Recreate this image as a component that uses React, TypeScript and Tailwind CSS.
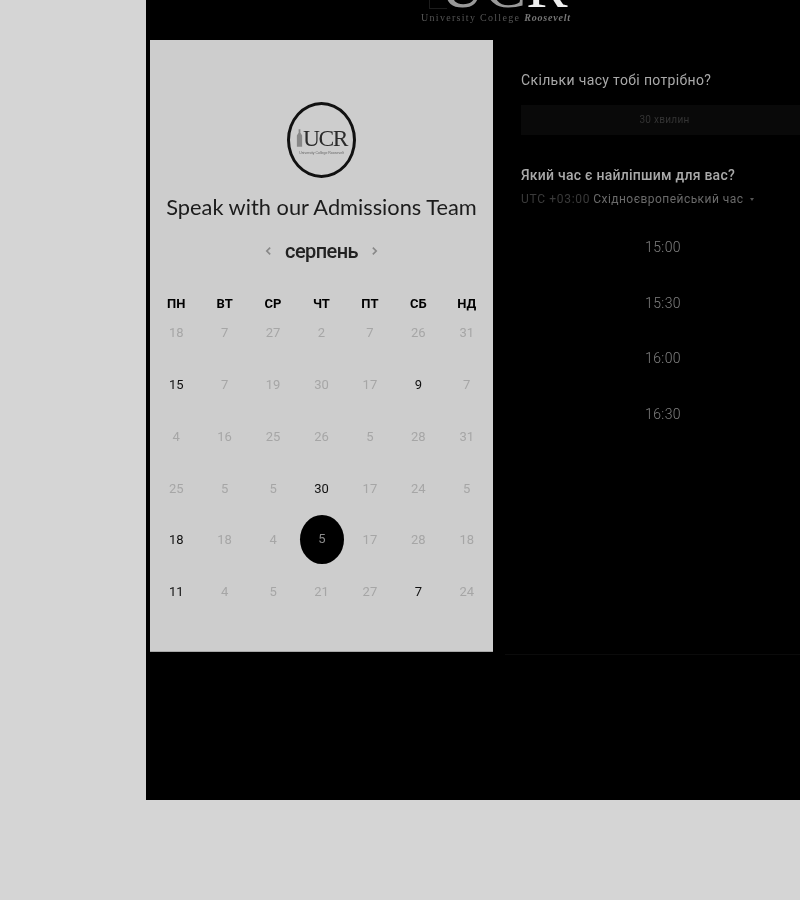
const weekDays = ['ПН', 'ВТ', 'СР', 'ЧТ', 'ПТ', 'СБ', 'НД'];

const rows = [
  [18, 7, 27, 2, 7, 26, 31],
  [15, 7, 19, 30, 17, 9, 7],
  [4, 16, 25, 26, 5, 28, 31],
  [25, 5, 5, 30, 17, 24, 5],
  [18, 18, 4, 5, 17, 28, 18],
  [11, 4, 5, 21, 27, 7, 24],
];

// row index + column index of the days that can be picked
const activeDays = ['1-0', '1-5', '3-3', '4-0', '5-0', '5-5'];

const times = ['15:00', '15:30', '16:00', '16:30'];

function Logo() {
  return (
    <div className="relative flex h-[76px] w-[69px] flex-col items-center justify-center rounded-[50%] border-[3px] border-[#111]">
      <div className="flex items-end">
        <svg className="mb-[3px] h-[20px] w-[7px]" viewBox="0 0 8 20" fill="#888">
          <path d="M3 0h2v4l2 3v13H1V7l2-3z" />
        </svg>
        <span className="font-['Liberation_Serif',serif] text-[23.5px] leading-[25px] tracking-[-1.5px] text-[#2a2a2a]">
          UCR
        </span>
      </div>
      <span className="whitespace-nowrap font-['Liberation_Sans',sans-serif] text-[3.5px] leading-[4px] text-[#666]">
        University College Roosevelt
      </span>
    </div>
  );
}

function Calendar() {
  return (
    <div className="flex h-[612px] w-[343px] shrink-0 flex-col items-center border-b border-[#a8a8a8] bg-[#cdcdcd] px-[2px] pt-[62px]">
      <Logo />
      <h1 className="mt-[14px] whitespace-nowrap font-['Lato',sans-serif] text-[21.8px] leading-[30px] text-[#1c1c1c]">
        Speak with our Admissions Team
      </h1>
      <div className="mt-[14px] flex h-[30px] items-center gap-[13px]">
        <svg className="h-[10px] w-[7px]" viewBox="0 0 8 12" fill="none" stroke="#888" strokeWidth="2">
          <path d="M6 2L2 6l4 4" />
        </svg>
        <span className="font-['Roboto',sans-serif] text-[20px] font-medium tracking-[-0.6px] text-[#222]">
          серпень
        </span>
        <svg className="h-[10px] w-[7px]" viewBox="0 0 8 12" fill="none" stroke="#888" strokeWidth="2">
          <path d="M2 2l4 4-4 4" />
        </svg>
      </div>
      <div className="mt-[31px] grid w-full grid-cols-7 font-['Roboto',sans-serif]">
        {weekDays.map((day) => (
          <div key={day} className="h-[10px] text-center text-[13px] font-bold leading-[14px] text-black">
            {day}
          </div>
        ))}
      </div>
      <div className="grid w-full grid-cols-7 font-['Roboto',sans-serif]">
        {rows.map((row, r) =>
          row.map((value, c) => {
            const key = `${r}-${c}`;
            const selected = r === 4 && c === 3;
            const active = activeDays.includes(key);
            return (
              <div key={key} className="flex h-[51.8px] items-center justify-center text-[13px]">
                {selected ? (
                  <span className="mb-[2px] ml-[1px] flex h-[49px] w-[44px] items-center justify-center rounded-[50%] bg-black text-[#8a8a8a]">
                    {value}
                  </span>
                ) : (
                  <span className={active ? 'text-[#111]' : 'text-[#a6a6a6]'}>{value}</span>
                )}
              </div>
            );
          })
        )}
      </div>
    </div>
  );
}

function Schedule() {
  return (
    <div className="ml-[12px] flex h-[615px] flex-1 flex-col border-b border-[#0b0b0b] pl-[16px] pt-[30px] font-['Roboto',sans-serif]">
      <p className="text-[14px] leading-[20px] tracking-[0.35px] text-[#a9a9a9]">Скільки часу тобі потрібно?</p>
      <div className="mt-[15px] flex h-[30px] w-[284px] items-center justify-center bg-[#090909] pb-[1px] pl-[3px] text-[10px] tracking-[0.3px] text-[#343434]">
        30 хвилин
      </div>
      <p className="mt-[30px] text-[14px] font-medium leading-[20px] tracking-[0.25px] text-[#a9a9a9]">
        Який час є найліпшим для вас?
      </p>
      <div className="mt-[4px] flex h-[20px] items-center whitespace-nowrap text-[12px]">
        <span className="tracking-[0.7px] text-[#3a3a3a]">UTC +03:00</span>
        <span className="ml-[3px] tracking-[0.45px] text-[#6a6a6a]">Східноєвропейський час</span>
        <span className="ml-[7px] h-0 w-0 border-x-[2.5px] border-t-[3px] border-x-transparent border-t-[#555]" />
      </div>
      <div className="mt-[21px] flex w-[284px] flex-col">
        {times.map((time) => (
          <div key={time} className="h-[55.6px] pt-[7px] text-center text-[14px] font-light leading-[20px] tracking-[0.4px] text-[#808080]">
            {time}
          </div>
        ))}
      </div>
    </div>
  );
}

export default function App() {
  return (
    <div className="h-[900px] w-full overflow-hidden bg-[#d5d5d5] pl-[146px] blur-[0.4px] grayscale">
      <div className="h-[800px] w-[654px] overflow-hidden bg-black">
        <header className="relative flex h-[40px] flex-col font-['Liberation_Serif',serif]">
          <div className="absolute left-[283px] top-0 h-[9px] w-[18px] border-b border-l border-[#1c1c1c]" />
          <div className="ml-[294px] mt-[-24px] h-[20px] whitespace-nowrap text-[62px] leading-[20px]">
            <span className="text-[#999]">UC</span>
            <span className="text-[#eee]">R</span>
          </div>
          <div className="ml-[275px] mt-[16px] flex items-baseline gap-[4px] whitespace-nowrap text-[10px] leading-[12px]">
            <span className="tracking-[1.3px] text-[#555]">University College</span>
            <span className="font-bold italic tracking-[0.8px] text-[#777]">Roosevelt</span>
          </div>
        </header>
        <div className="flex pl-[4px]">
          <Calendar />
          <Schedule />
        </div>
      </div>
    </div>
  );
}
